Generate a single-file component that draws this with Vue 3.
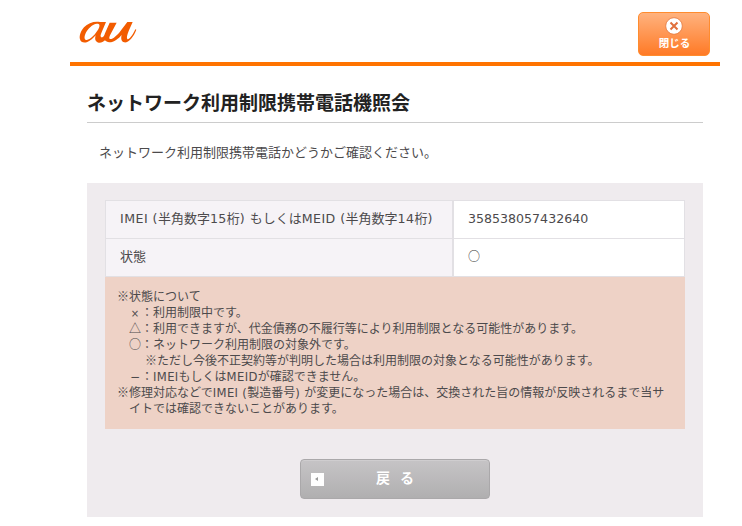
<script setup>
const imei = '358538057432640';
</script>

<template>
  <div class="page">
    <header class="head">
      <svg class="logo" width="60" height="24" viewBox="54 60 180 72" aria-label="au">
        <path fill="#f25c00" fill-rule="evenodd" d="M138 66L120 66C104 63 84 68 72 82C62 93 57 108 60 118C62 127 72 130 82 126C91 122 100 115 107 106C104 116 105 126 116 128C124 129 132 124 139 116C143 104 148 92 144 92C136 104 128 114 124 112C120 110 122 104 125 97ZM116 72C120 74 119 81 115 88C108 100 92 120 80 120C73 120 72 112 76 102C82 86 103 66 116 72Z"/>
        <path fill="#f25c00" d="M149 68L170 68L152 102C148 110 146 116 150 117C158 118 172 106 182 92L202 66L218 66L207 91C203 101 199 112 202 117C205 121 216 110 226 88L229 89C221 111 205 129 193 127C184 125 182 116 185 105C176 116 160 128 147 127C131 125 130 112 135 100Z"/>
      </svg>
      <a class="close">
        <svg width="18" height="18" viewBox="0 0 18 18">
          <circle cx="9" cy="9" r="8.300" fill="#fff" stroke="#e2763c" stroke-width="0.800"/>
          <path d="M5.500 5.500l7 7M12.500 5.500l-7 7" stroke="#e0703c" stroke-width="2" fill="none"/>
        </svg>
        <span>閉じる</span>
      </a>
    </header>
    <main class="main">
      <h1 class="title">ネットワーク利用制限携帯電話機照会</h1>
      <p class="lead">ネットワーク利用制限携帯電話かどうかご確認ください。</p>
      <section class="panel">
        <div class="table">
          <div class="th"><span class="lat">IMEI (</span>半角数字<span class="lat">15</span>桁<span class="lat">) </span>もしくは<span class="lat">MEID (</span>半角数字<span class="lat">14</span>桁<span class="lat">)</span></div>
          <div class="td"><span class="num">{{ imei }}</span></div>
          <div class="th">状態</div>
          <div class="td"><span class="circle">○</span></div>
        </div>
        <ul class="note">
          <li>※状態について</li>
          <li class="l1"><span class="mark">×</span>：利用制限中です。</li>
          <li class="l1">△：利用できますが、代金債務の不履行等により利用制限となる可能性があります。</li>
          <li class="l1">○：ネットワーク利用制限の対象外です。</li>
          <li class="l2">※ただし今後不正契約等が判明した場合は利用制限の対象となる可能性があります。</li>
          <li class="l1"><span class="mark dash">−</span>：<span class="lat">IMEI</span>もしくは<span class="lat">MEID</span>が確認できません。</li>
          <li class="hang">※修理対応などで<span class="lat">IMEI (</span>製造番号<span class="lat">) </span>が変更になった場合は、交換された旨の情報が反映されるまで当サイトでは確認できないことがあります。</li>
        </ul>
        <div class="actions">
          <a class="back">
            <span class="arrow"></span>
            <span class="back-label">戻 る</span>
          </a>
        </div>
      </section>
    </main>
  </div>
</template>

<style>
html, body { margin: 0; background: #fff; overflow: hidden; }
</style>

<style scoped>
.page {
  width: 650px;
  margin-left: 70px;
  font-family: "Noto Sans CJK JP", "DejaVu Sans", sans-serif;
  font-weight: 400;
  color: #4c4a4c;
  font-size: 13px;
}
.lat { font-family: "DejaVu Sans", sans-serif; font-size: 12.600px; letter-spacing: 0.450px; line-height: 1; }
.num { font-family: "DejaVu Sans", sans-serif; font-size: 12.600px; }
.head {
  height: 62px;
  border-bottom: 4px solid #ff7300;
  display: flex;
  justify-content: space-between;
  align-items: flex-start;
}
.logo { margin: 20px 0 0 8px; }
.close {
  margin: 12px 10px 0 0;
  width: 72px;
  height: 44px;
  box-sizing: border-box;
  border: 1px solid #ff8c2e;
  border-radius: 5px;
  background: linear-gradient(#ffb27e, #ff7a26);
  display: flex;
  flex-direction: column;
  align-items: center;
  padding-top: 4px;
  color: #fff;
  font-weight: 700;
  font-size: 10.500px;
  line-height: 14px;
}
.close svg { display: block; }
.close span { margin-top: 1px; padding-left: 1px; }
.main { padding: 0 17px; }
.title {
  margin: 0;
  padding-top: 22px;
  height: 57px;
  box-sizing: border-box;
  border-bottom: 1px solid #ccc;
  font-size: 19px;
  line-height: 28px;
  font-weight: 700;
  color: #222;
}
.lead {
  margin: 0;
  padding: 19px 0 0 12px;
  height: 60px;
  box-sizing: border-box;
  line-height: 20px;
}
.panel {
  background: #efebee;
  padding: 17px 18px 18px;
}
.table {
  display: grid;
  grid-template-columns: 349px 231px;
  background: #fff;
}
.th, .td {
  height: 38px;
  box-sizing: border-box;
  border: 1px solid #e2e0e4;
  border-width: 1px 1px 0 1px;
  line-height: 34px;
  padding-left: 14px;
}
.th { background: #f6f3f7; border-right-width: 2px; }
.td { background: #fff; border-left-width: 0; padding-left: 14px; }
.circle { font-size: 12px; color: #333; }
.note {
  list-style: none;
  margin: 0;
  padding: 11px 12px 13px;
  background: #eed2c6;
  font-size: 12px;
  line-height: 16px;
  height: 153px;
  box-sizing: border-box;
  border-top: 1px solid #e2e0e4;
}
.note .lat { font-size: 11.600px; letter-spacing: 0.350px; }
.mark { display: inline-block; width: 12px; text-align: center; font-family: "DejaVu Sans", sans-serif; font-size: 10px; line-height: 1; }
.dash { font-size: 12px; }
.l1 { padding-left: 12px; }
.l2 { padding-left: 28px; }
.hang { padding-left: 12px; text-indent: -12px; }
.actions { display: flex; justify-content: center; padding-top: 30px; }
.back {
  position: relative;
  width: 190px;
  height: 40px;
  box-sizing: border-box;
  border: 1px solid #aaa8aa;
  border-radius: 4px;
  background: linear-gradient(#c6c4c6, #b0afb0);
  display: flex;
  align-items: center;
  justify-content: center;
  color: #fff;
  font-weight: 700;
  font-size: 14px;
  padding-bottom: 4px;
  box-shadow: inset 0 1px 0 #cfcdcf;
}
.back-label { word-spacing: 7px; }
.arrow {
  position: absolute;
  left: 10px;
  top: 13px;
  width: 13px;
  height: 13px;
  background: #fff;
}
.arrow::after {
  content: "";
  position: absolute;
  left: 4px;
  top: 4px;
  border: 2.500px solid transparent;
  border-right: 3px solid #999;
  border-left: 0;
}
</style>
